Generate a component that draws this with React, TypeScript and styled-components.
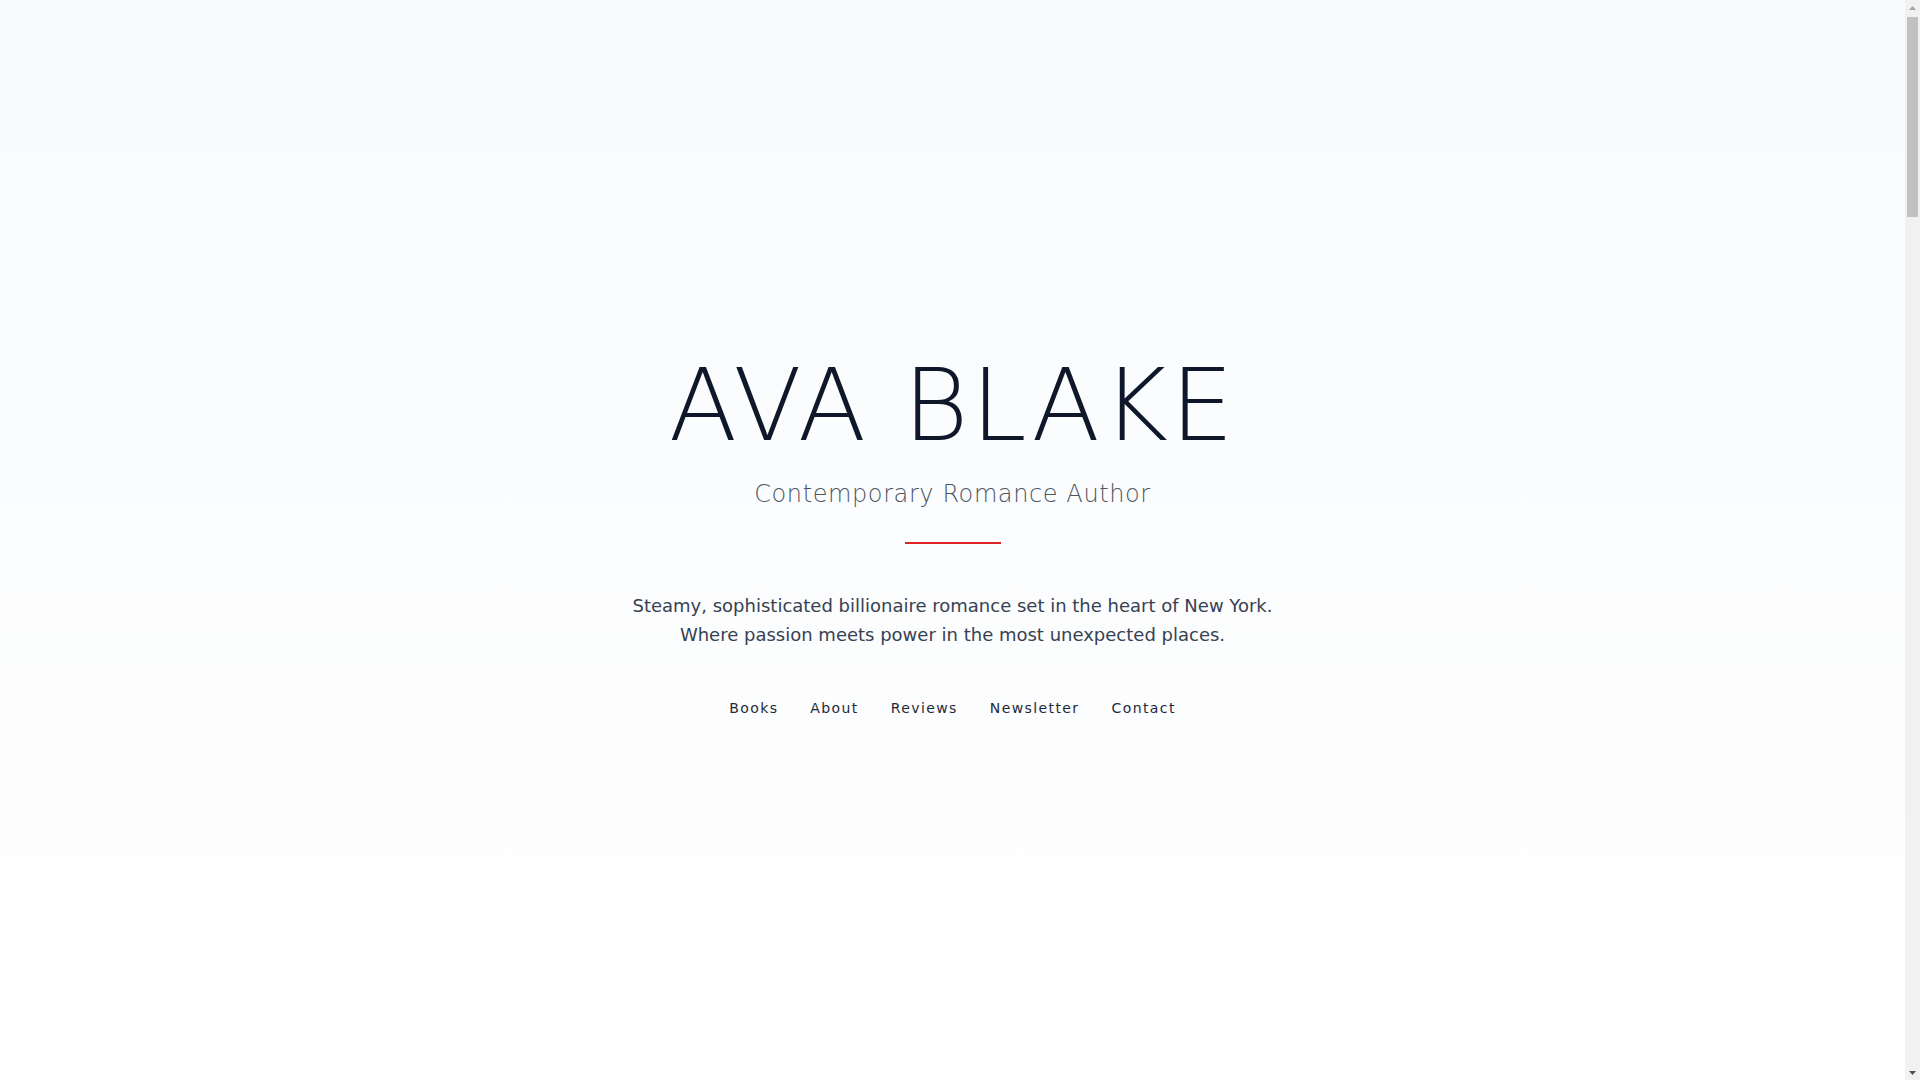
import styled, { createGlobalStyle } from "styled-components";

const GlobalStyle = createGlobalStyle`
  *, *::before, *::after { box-sizing: border-box; }
  html, body { margin: 0; padding: 0; height: 100%; overflow: hidden; }
  body {
    font-family: "DejaVu Sans", "Noto Sans", sans-serif;
    color: #0f172a;
    background: #ffffff;
  }
  a { color: inherit; text-decoration: none; }
`;

const books = [
  { title: "The Billionaire's Bargain", series: "Manhattan Nights, Book 1", blurb: "A contract marriage. A city that never sleeps. A man who never loses." },
  { title: "Midnight on Park Avenue", series: "Manhattan Nights, Book 2", blurb: "She came to New York for a fresh start. He wanted nothing but her." },
  { title: "Penthouse Promises", series: "Manhattan Nights, Book 3", blurb: "One night above the skyline turns into something neither can walk away from." },
];

const reviews = [
  { quote: "Sizzling, smart and impossible to put down. Ava Blake writes the kind of hero you never forget.", by: "Romance Readers Weekly" },
  { quote: "The chemistry leaps off the page. I devoured it in one sitting.", by: "Goodreads reviewer" },
  { quote: "Glamour, heat and heart — the perfect escape into Manhattan's elite.", by: "Book Nook Blog" },
];

export default function App() {
  return (
    <>
      <GlobalStyle />
      <Shell>
        <Page>
          <Hero>
            <Title>AVA BLAKE</Title>
            <Subtitle>Contemporary Romance Author</Subtitle>
            <Divider />
            <Tagline>
              Steamy, sophisticated billionaire romance set in the heart of New York.
              <br />
              Where passion meets power in the most unexpected places.
            </Tagline>
            <Nav>
              <NavLink href="#books">Books</NavLink>
              <NavLink href="#about">About</NavLink>
              <NavLink href="#reviews">Reviews</NavLink>
              <NavLink href="#newsletter">Newsletter</NavLink>
              <NavLink href="#contact">Contact</NavLink>
            </Nav>
          </Hero>

          <Section id="books">
            <SectionTitle>Books</SectionTitle>
            <Divider />
            <BookGrid>
              {books.map((b) => (
                <BookCard key={b.title}>
                  <Cover />
                  <BookTitle>{b.title}</BookTitle>
                  <BookSeries>{b.series}</BookSeries>
                  <BodyText>{b.blurb}</BodyText>
                </BookCard>
              ))}
            </BookGrid>
          </Section>

          <Section id="about" $tint>
            <SectionTitle>About</SectionTitle>
            <Divider />
            <Narrow>
              <BodyText>
                Ava Blake writes contemporary romance about powerful men and the women who bring them to their knees.
                A lifelong New Yorker, she spends her days people-watching in Midtown cafés and her nights writing
                stories full of glamour, heat and happily-ever-afters.
              </BodyText>
              <BodyText>
                When she isn't writing, you'll find her exploring rooftop bars, hunting for vintage jewellery,
                or curled up with a good book and a glass of champagne.
              </BodyText>
            </Narrow>
          </Section>

          <Section id="reviews">
            <SectionTitle>Reviews</SectionTitle>
            <Divider />
            <ReviewList>
              {reviews.map((r) => (
                <Review key={r.by}>
                  <Quote>“{r.quote}”</Quote>
                  <Byline>— {r.by}</Byline>
                </Review>
              ))}
            </ReviewList>
          </Section>

          <Section id="newsletter" $tint>
            <SectionTitle>Newsletter</SectionTitle>
            <Divider />
            <Narrow>
              <BodyText>Be the first to hear about new releases, exclusive excerpts and giveaways.</BodyText>
              <Form>
                <Input placeholder="Your email address" />
                <Button type="button">Subscribe</Button>
              </Form>
            </Narrow>
          </Section>

          <Section id="contact">
            <SectionTitle>Contact</SectionTitle>
            <Divider />
            <Narrow>
              <BodyText>For publicity, rights and event enquiries, please get in touch.</BodyText>
              <BodyText>hello@avablake.com</BodyText>
            </Narrow>
          </Section>

          <Footer>© 2024 Ava Blake. All rights reserved.</Footer>
        </Page>

        <ScrollBar aria-hidden>
          <ArrowButton>
            <svg width="7" height="4" viewBox="0 0 7 4">
              <polygon points="0,4 3.5,0 7,4" fill="#a3a3a3" />
            </svg>
          </ArrowButton>
          <Track>
            <Thumb />
          </Track>
          <ArrowButton>
            <svg width="7" height="4" viewBox="0 0 7 4">
              <polygon points="0,0 7,0 3.5,4" fill="#505050" />
            </svg>
          </ArrowButton>
        </ScrollBar>
      </Shell>
    </>
  );
}

const Shell = styled.div`
  display: flex;
  height: 100vh;
`;

const Page = styled.main`
  flex: 1;
  min-width: 0;
  overflow-y: auto;
  scrollbar-width: none;
  &::-webkit-scrollbar {
    display: none;
  }
`;

const ScrollBar = styled.div`
  width: 15px;
  flex: none;
  display: flex;
  flex-direction: column;
  background: #f1f1f1;
`;

const ArrowButton = styled.div`
  height: 15px;
  flex: none;
  display: flex;
  align-items: center;
  justify-content: center;
`;

const Track = styled.div`
  flex: 1;
  padding: 2px 2px 0;
`;

const Thumb = styled.div`
  height: 200px;
  background: #c1c1c1;
`;

const Hero = styled.header`
  min-height: 100vh;
  display: flex;
  flex-direction: column;
  align-items: center;
  justify-content: center;
  text-align: center;
  padding: 0 24px 6px;
  background: linear-gradient(to bottom, #f8fafc, #ffffff);
`;

const Title = styled.h1`
  margin: 0 0 22px;
  font-size: 100px;
  line-height: 1;
  font-weight: 200;
  letter-spacing: 0.025em;
  color: #0f172a;
`;

const Subtitle = styled.p`
  margin: 0 0 32px;
  font-size: 24px;
  line-height: 32px;
  font-weight: 200;
  letter-spacing: 0.025em;
  color: #4b5563;
`;

const Divider = styled.div`
  width: 96px;
  height: 2px;
  background: #dc2626;
  margin: 0 auto 48px;
`;

const Tagline = styled.p`
  margin: -1px 0 49px;
  max-width: 672px;
  font-size: 18px;
  line-height: 1.625;
  color: #374151;
`;

const Nav = styled.nav`
  display: flex;
  justify-content: center;
  gap: 32px;
`;

const NavLink = styled.a`
  font-size: 14px;
  line-height: 20px;
  letter-spacing: 0.1em;
  color: #1e293b;
`;

const Section = styled.section<{ $tint?: boolean }>`
  padding: 160px 24px;
  display: flex;
  flex-direction: column;
  align-items: center;
  text-align: center;
  background: ${(p) => (p.$tint ? "#f8fafc" : "#ffffff")};
`;

const SectionTitle = styled.h2`
  margin: 0 0 24px;
  font-size: 48px;
  font-weight: 200;
  letter-spacing: 0.05em;
  color: #0f172a;
`;

const BookGrid = styled.div`
  display: grid;
  grid-template-columns: repeat(3, 320px);
  gap: 48px;
`;

const BookCard = styled.article`
  display: flex;
  flex-direction: column;
  align-items: center;
  gap: 12px;
`;

const Cover = styled.div`
  width: 320px;
  height: 480px;
  background: linear-gradient(160deg, #1e293b, #0f172a);
  box-shadow: 0 20px 40px rgba(15, 23, 42, 0.2);
  margin-bottom: 16px;
`;

const BookTitle = styled.h3`
  margin: 0;
  font-size: 22px;
  font-weight: 300;
  color: #0f172a;
`;

const BookSeries = styled.p`
  margin: 0;
  font-size: 13px;
  letter-spacing: 0.1em;
  text-transform: uppercase;
  color: #dc2626;
`;

const BodyText = styled.p`
  margin: 0 0 20px;
  font-size: 18px;
  line-height: 1.625;
  color: #334155;
`;

const Narrow = styled.div`
  max-width: 672px;
`;

const ReviewList = styled.div`
  display: flex;
  flex-direction: column;
  gap: 56px;
  max-width: 768px;
`;

const Review = styled.blockquote`
  margin: 0;
`;

const Quote = styled.p`
  margin: 0 0 16px;
  font-size: 24px;
  line-height: 1.5;
  font-weight: 200;
  color: #1e293b;
`;

const Byline = styled.p`
  margin: 0;
  font-size: 14px;
  letter-spacing: 0.1em;
  color: #64748b;
`;

const Form = styled.form`
  display: flex;
  gap: 12px;
  justify-content: center;
  margin-top: 16px;
`;

const Input = styled.input`
  width: 360px;
  padding: 14px 16px;
  font-family: inherit;
  font-size: 16px;
  border: 1px solid #cbd5e1;
  background: #ffffff;
`;

const Button = styled.button`
  padding: 14px 28px;
  font-family: inherit;
  font-size: 14px;
  letter-spacing: 0.1em;
  border: none;
  background: #0f172a;
  color: #ffffff;
`;

const Footer = styled.footer`
  padding: 64px 24px;
  text-align: center;
  font-size: 13px;
  color: #94a3b8;
  border-top: 1px solid #e2e8f0;
`;
